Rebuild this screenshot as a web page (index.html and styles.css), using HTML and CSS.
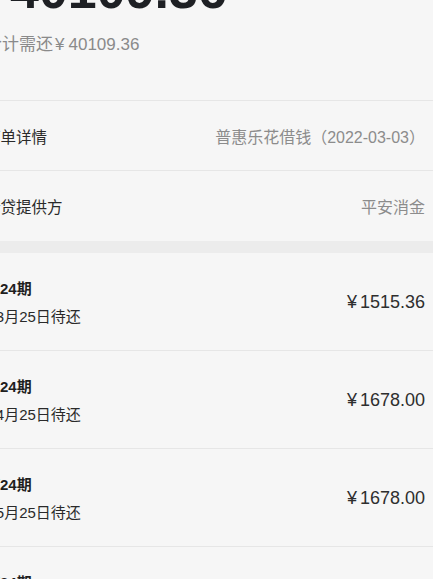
FILE: index.html
```html
<!DOCTYPE html>
<html lang="zh-CN">
<head>
<meta charset="utf-8">
<title>还款计划</title>
<link rel="stylesheet" href="styles.css">
</head>
<body>
<div class="page">
  <section class="summary">
    <div class="total">40109.36</div>
    <div class="need">合计需还<span class="cur">¥</span>40109.36</div>
  </section>
  <section class="info">
    <div class="info-row">
      <span class="label">订单详情</span>
      <span class="value">普惠乐花借钱（2022-03-03）</span>
    </div>
    <div class="info-row">
      <span class="label">借贷提供方</span>
      <span class="value">平安消金</span>
    </div>
  </section>
  <div class="band"></div>
  <section class="plan">
    <div class="plan-row">
      <div class="plan-left">
        <div class="term">1/24期</div>
        <div class="due">03月25日待还</div>
      </div>
      <div class="amount"><span class="cur">¥</span>1515.36</div>
    </div>
    <div class="plan-row">
      <div class="plan-left">
        <div class="term">2/24期</div>
        <div class="due">04月25日待还</div>
      </div>
      <div class="amount"><span class="cur">¥</span>1678.00</div>
    </div>
    <div class="plan-row">
      <div class="plan-left">
        <div class="term">3/24期</div>
        <div class="due">05月25日待还</div>
      </div>
      <div class="amount"><span class="cur">¥</span>1678.00</div>
    </div>
    <div class="plan-row">
      <div class="plan-left">
        <div class="term">4/24期</div>
        <div class="due">06月25日待还</div>
      </div>
      <div class="amount"><span class="cur">¥</span>1678.00</div>
    </div>
  </section>
</div>
</body>
</html>
```

FILE: styles.css
```css
html, body {
  margin: 0;
  padding: 0;
  background: #f6f6f6;
  overflow: hidden;
}

body {
  font-family: "Liberation Sans", "Noto Sans CJK SC", sans-serif;
  color: #222;
}

.page {
  margin-left: -15px;
}

.summary {
  border-bottom: 1px solid #e6e6e6;
  padding-bottom: 43px;
}

.total {
  margin-top: -36px;
  padding-left: 25px;
  font-size: 52px;
  line-height: 52px;
  height: 52px;
  font-weight: 700;
  color: #1e2024;
  white-space: nowrap;
}

.need {
  margin-top: 17px;
  font-size: 17px;
  line-height: 24px;
  color: #8a8a8a;
}

.need .cur {
  margin: 0 4px 0 2px;
}

.info-row {
  height: 69px;
  padding-right: 8px;
  display: flex;
  align-items: center;
  justify-content: space-between;
  font-size: 15.5px;
}

.info-row + .info-row {
  border-top: 1px solid #e6e6e6;
  height: 70px;
}

.label {
  color: #2a2a2a;
}

.value {
  font-size: 16px;
  color: #8c8c8c;
}

.band {
  height: 12px;
  background: #ececec;
}

.plan-row {
  height: 97px;
  padding-right: 8px;
  display: flex;
  align-items: center;
  justify-content: space-between;
  border-bottom: 1px solid #e6e6e6;
}

.plan-left {
  padding-left: 2.5px;
  padding-top: 3px;
  display: flex;
  flex-direction: column;
  gap: 6px;
}

.term {
  font-size: 15px;
  line-height: 22px;
  font-weight: 700;
  color: #1f1f1f;
}

.due {
  font-size: 15px;
  line-height: 22px;
  color: #2a2a2a;
}

.amount {
  font-size: 18px;
  line-height: 24px;
  color: #2e2e2e;
}

.amount .cur {
  margin-right: 3px;
}
```
